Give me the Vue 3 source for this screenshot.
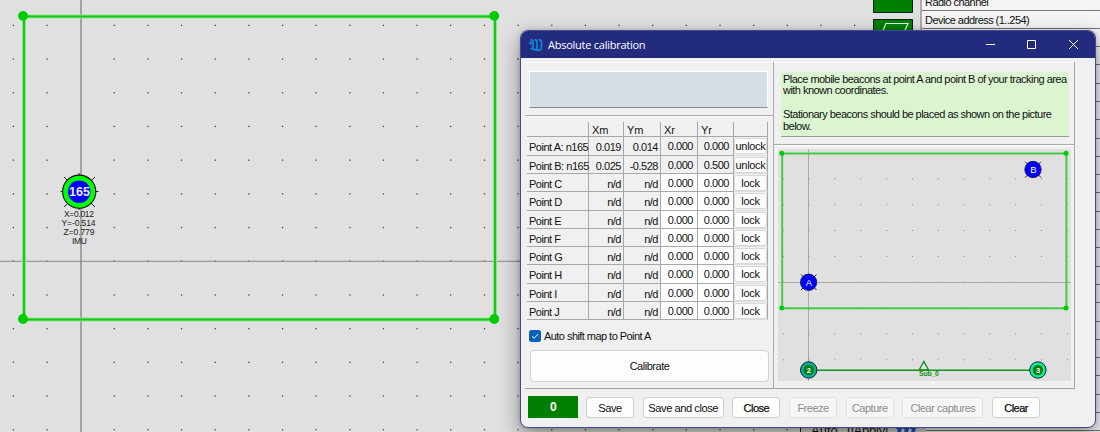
<template>
  <div class="desktop">
    <svg class="map" width="1100" height="432" viewBox="0 0 1100 432">
      <g class="dots">
        <template v-for="y in mapDotsY" :key="y">
          <rect v-for="x in mapDotsX" :key="x" :x="x" :y="y" width="1.3" height="1.3" />
        </template>
      </g>
      <path class="axis-y" d="M81 0V432" />
      <path class="axis-x" d="M0 261.3H920" />
      <rect class="zone-glow" x="24" y="16.5" width="471" height="303" />
      <rect class="zone" x="24" y="16.5" width="471" height="303" />
      <circle v-for="c in zoneCorners" :key="c.join()" class="corner" :cx="c[0]" :cy="c[1]" r="4.9" />
      <path
        class="rays"
        d="M79 173V210M60.5 191.5H98.5M64 177L95 207M95 177L64 207"
      />
      <circle class="beacon" cx="79.2" cy="191.7" r="16.6" />
      <circle class="beacon-core" cx="79.2" cy="191.7" r="11.3" />
      <text class="beacon-id" x="79.4" y="196.1" textLength="21">165</text>
      <g class="coords">
        <text x="64" y="216.7" textLength="30">X=0.012</text>
        <text x="61.5" y="226" textLength="34">Y=-0.514</text>
        <text x="63.5" y="235" textLength="31">Z=0.779</text>
        <text x="72" y="244.2" textLength="15">IMU</text>
      </g>
    </svg>

    <div class="side">
      <div class="side-tools">
        <div class="tool"></div>
        <div class="tool">
          <svg width="38" height="22" viewBox="0 0 38 22">
            <path d="M6 17L12 3.5H34L28 17Z" fill="none" stroke="#e6ffe6" stroke-width="1.2" />
          </svg>
        </div>
      </div>
      <div class="side-list">
        <div class="side-row">Radio channel</div>
        <div class="side-row">Device address (1..254)</div>
        <div v-for="n in 22" :key="n" class="side-row"></div>
      </div>
    </div>

    <div class="footer-strip">
      <span class="auto">Auto</span>
      <span class="apply">[|Apply|</span>
      <svg width="34" height="12" viewBox="0 0 34 12">
        <path d="M-1 0L8 6L6 12M6 0L15 6L13 12M13 0L22 6L20 12" fill="none" stroke="#1e50c8" stroke-width="3.5" />
      </svg>
    </div>

    <div class="window">
      <div class="titlebar">
        <svg class="logo" width="14" height="14" viewBox="0 0 14 14">
          <path d="M1.5 2Q4.5 1.5 4 5V9Q4 11.5 1.5 10.5M5.5 2Q8.5 1.5 8 5V9Q8 12.5 4 11.5M9.5 2Q13 1.5 12.5 5V9Q12.5 13 7.5 12" />
          <circle cx="1.5" cy="5" r="0.7" />
        </svg>
        <span class="title">Absolute calibration</span>
        <svg class="controls" width="92" height="12" viewBox="0 0 92 12">
          <path d="M1 5.5H10M42.5 1.5H50.5V9.5H42.5ZM84 1L93 10M93 1L84 10" />
        </svg>
      </div>

      <div class="content">
        <div class="left">
          <div class="status-panel">
            <div class="status-box"></div>
          </div>
          <div class="table-panel">
            <div class="grid">
              <div class="cell head"></div>
              <div v-for="h in headers" :key="h" class="cell head">{{ h }}</div>
              <div class="cell head"></div>
              <template v-for="p in points" :key="p.name">
                <div class="cell name">{{ p.name }}</div>
                <div class="cell num">{{ p.xm }}</div>
                <div class="cell num">{{ p.ym }}</div>
                <div class="cell num real" :class="{ editable: !p.locked }">{{ p.xr }}</div>
                <div class="cell num real" :class="{ editable: !p.locked }">{{ p.yr }}</div>
                <div class="cell action">
                  <button class="lock">{{ p.locked ? 'unlock' : 'lock' }}</button>
                </div>
              </template>
            </div>
          </div>
          <label class="shift">
            <span class="check">
              <svg width="12" height="12" viewBox="0 0 12 12">
                <path d="M3 6.2L5.2 8.2L9.2 4" fill="none" stroke="#fff" stroke-width="1" />
              </svg>
            </span>
            <span>Auto shift map to Point A</span>
          </label>
          <button class="calibrate">Calibrate</button>
        </div>

        <div class="right">
          <div class="hint-panel">
            <div class="hint">
              Place mobile beacons at point A and point B of your tracking area<br />
              with known coordinates.<br /><br />
              Stationary beacons should be placed as shown on the picture<br />
              below.
            </div>
          </div>
          <div class="scheme-panel">
            <svg class="scheme" width="293" height="232" viewBox="778 149.5 293 232">
              <g class="scheme-dots">
                <template v-for="y in schemeDotsY" :key="y">
                  <rect v-for="x in schemeDotsX" :key="x" :x="x" :y="y" width="1" height="1" />
                </template>
              </g>
              <path class="scheme-axis" d="M808.5 149V382M778 283H1071" />
              <rect class="scheme-zone" x="782.2" y="154" width="284.2" height="154.8" />
              <circle v-for="c in schemeCorners" :key="c.join()" class="corner" :cx="c[0]" :cy="c[1]" r="2.5" />
              <path class="rays" d="M801 275L816.5 290.5M816.5 275L801 290.5M1025.2 162.2L1041 178M1041 162.2L1025.2 178" />
              <circle class="mobile" cx="808.6" cy="282.8" r="8.2" />
              <circle class="mobile" cx="1033" cy="170" r="8.2" />
              <text class="mobile-id" x="808.6" y="286.4">A</text>
              <text class="mobile-id" x="1033.2" y="173.6">B</text>
              <path class="base" d="M809 370.8H1038" />
              <path class="submap" d="M919.2 370.5L923.8 362L928.5 370.5Z" />
              <text class="submap-id" x="919" y="376" textLength="19.5">Sub_0</text>
              <circle class="station" cx="808.7" cy="370.5" r="8.2" />
              <circle class="station bright" cx="1037.9" cy="370.5" r="8.2" />
              <circle class="station-core" cx="808.7" cy="370.5" r="5.2" />
              <circle class="station-core" cx="1037.9" cy="370.5" r="5.2" />
              <text class="station-id" x="808.7" y="373.2">2</text>
              <text class="station-id" x="1037.9" y="373.2">3</text>
            </svg>
          </div>
        </div>
      </div>

      <div class="actions">
        <div class="counter">0</div>
        <button
          v-for="b in buttons"
          :key="b.label"
          class="btn"
          :class="[b.kind, { wide: b.wide }]"
          :disabled="b.kind === 'off'"
        >{{ b.label }}</button>
      </div>
    </div>
  </div>
</template>

<script setup>
const steps = (start, step, count) =>
  Array.from({ length: count }, (_, i) => +(start + step * i).toFixed(1));

const mapDotsX = steps(12.7, 33.65, 27).filter((x) => x < 870);
const mapDotsY = steps(24.7, 33.7, 13);
const schemeDotsX = steps(782.8, 25.82, 12);
const schemeDotsY = steps(178.8, 25.85, 8);

const zoneCorners = [[23, 15.9], [494.3, 15.9], [23, 319], [494.3, 319]];
const schemeCorners = [[781.8, 153.8], [1066, 153.8], [781.8, 308.5], [1066, 308.5]];

const headers = ['Xm', 'Ym', 'Xr', 'Yr'];

const points = [
  { name: 'Point A: n165', xm: '0.019', ym: '0.014', xr: '0.000', yr: '0.000', locked: true },
  { name: 'Point B: n165', xm: '0.025', ym: '-0.528', xr: '0.000', yr: '0.500', locked: true },
  ...'CDEFGHIJ'.split('').map((letter) => ({
    name: `Point ${letter}`,
    xm: 'n/d',
    ym: 'n/d',
    xr: '0.000',
    yr: '0.000',
    locked: false
  }))
];

const buttons = [
  { label: 'Save', kind: 'big' },
  { label: 'Save and close', kind: 'big', wide: true },
  { label: 'Close', kind: 'strong' },
  { label: 'Freeze', kind: 'off' },
  { label: 'Capture', kind: 'off' },
  { label: 'Clear captures', kind: 'off', wide: true },
  { label: 'Clear', kind: 'strong' }
];
</script>

<style>
body {
  overflow: hidden;
}
</style>

<style scoped>
.desktop {
  position: relative;
  width: 1100px;
  height: 432px;
  overflow: hidden;
  background: #e0e0e0;
  font-family: "Liberation Sans", Arial, sans-serif;
  font-size: 11px;
  letter-spacing: -0.48px;
  color: #111;
}

.desktop * {
  box-sizing: border-box;
}

.map {
  display: block;
  letter-spacing: 0;
}

.dots {
  fill: #444;
}

.axis-y {
  stroke: #a2a2a2;
  stroke-width: 2;
}

.axis-x {
  stroke: #888;
  stroke-width: 1;
}

.zone-glow {
  fill: none;
  stroke: #8df08d;
  stroke-width: 4;
}

.zone {
  fill: none;
  stroke: #1cc41c;
  stroke-width: 2.2;
}

.corner {
  fill: #0c0;
}

.rays {
  stroke: #222;
  stroke-width: 1;
}

.beacon {
  fill: #0f0;
  stroke: #111;
  stroke-width: 1.1;
}

.beacon-core {
  fill: #00f;
}

.beacon-id {
  font-size: 12.5px;
  font-weight: bold;
  fill: #e8e8ff;
  text-anchor: middle;
}

.coords {
  font-size: 8.5px;
  fill: #222;
}

.side {
  position: absolute;
  top: 0;
  right: 0;
  display: flex;
  gap: 7px;
  width: 227px;
  height: 432px;
}

.side-tools {
  display: flex;
  flex-direction: column;
  gap: 6px;
  width: 40px;
}

.tool {
  height: 22px;
  border: 1px solid #122;
  background: #008000;
}

.tool:first-child {
  height: 13px;
  border-top: 0;
}

.side-list {
  flex: 1;
  border-left: 2px solid #aaa;
  background: #f4f4f4;
}

.side-row {
  height: 18.3px;
  padding: 3.5px 0 0 3px;
  border-bottom: 1px solid #777;
  line-height: 13px;
  letter-spacing: -0.55px;
}

.side-row:first-child {
  height: 10.5px;
  padding-top: 0;
  line-height: 5px;
}

.footer-strip {
  position: absolute;
  left: 800px;
  top: 423px;
  display: flex;
  height: 9px;
  overflow: hidden;
  background: #d2d2d2;
  font-size: 13px;
  line-height: 15px;
}

.auto {
  width: 47px;
  padding-left: 10px;
  border-left: 1px solid #222;
  letter-spacing: 0;
}

.apply {
  width: 45px;
  letter-spacing: -0.2px;
}

.window {
  position: absolute;
  left: 520px;
  top: 30px;
  width: 576px;
  height: 398px;
  border: 1px solid #44488c;
  border-radius: 8px;
  overflow: hidden;
  background: #f0f0f0;
  box-shadow: 0 9px 22px rgba(0, 0, 0, 0.38), 0 0 5px rgba(0, 0, 0, 0.2);
}

.titlebar {
  display: flex;
  align-items: center;
  height: 27px;
  padding-left: 8px;
  background: #232b7e;
  color: #fff;
}

.logo {
  fill: none;
  stroke: #1285d6;
  stroke-width: 1.8;
}

.title {
  flex: 1;
  padding-left: 5px;
  font-family: "Open Sans", "Noto Sans", sans-serif;
  font-size: 11px;
  letter-spacing: -0.25px;
}

.controls {
  margin-right: 18px;
  overflow: visible;
  fill: none;
  stroke: #fff;
  stroke-width: 1;
}

.content {
  display: flex;
  height: 331px;
  margin: 0 20px 0 4px;
  padding-top: 4px;
  border-bottom: 1px solid #a0a0a0;
}

.left {
  width: 249px;
  border-right: 1px solid #aaa;
}

.status-panel {
  height: 54px;
  padding: 8px 5px 0 4px;
  border-top: 1px solid #fff;
  border-bottom: 1px solid #aaa;
}

.status-box {
  height: 37px;
  border: 1px solid #fff;
  border-bottom: 1px solid #8a8a8a;
  background: #d7dee6;
}

.table-panel {
  padding: 5px 5px 0 2px;
  border-top: 1px solid #fff;
}

.grid {
  display: grid;
  grid-template-columns: 62px 35px 37px 37px 36px 34px;
  grid-template-rows: 15.4px repeat(10, 18.3px);
}

.cell {
  border-right: 1px solid #a8a8a8;
  border-bottom: 1px solid #a8a8a8;
  line-height: 20px;
  white-space: nowrap;
}

.head {
  padding-left: 3px;
  line-height: 16px;
  letter-spacing: 0;
}

.name {
  padding-left: 2px;
}

.num {
  padding-right: 2px;
  text-align: right;
}

.real {
  padding-right: 4px;
  line-height: 18px;
}

.editable {
  background: #fff;
}

.action {
  border-bottom-color: #ddd;
}

button {
  font-family: inherit;
  font-size: 11px;
  letter-spacing: inherit;
  color: #111;
}

.lock {
  display: block;
  width: 33px;
  height: 16px;
  margin-top: 1px;
  padding: 0;
  border: 1px solid #d8d8d8;
  border-radius: 3px;
  background: #fdfdfd;
  line-height: 14px;
  letter-spacing: -0.3px;
}

.shift {
  display: flex;
  align-items: center;
  gap: 3px;
  margin: 10px 0 0 4px;
  height: 12px;
  letter-spacing: -0.55px;
}

.check {
  width: 12px;
  height: 12px;
  border-radius: 2.5px;
  background: #0560b8;
}

.check svg {
  display: block;
}

.calibrate {
  display: block;
  width: 239px;
  height: 32px;
  margin: 8px 0 0 5px;
  border: 1px solid #d2d2d2;
  border-radius: 4px;
  background: #fdfdfd;
}

.right {
  width: 301px;
  border-right: 1px solid #a8a8a8;
}

.hint-panel {
  height: 83px;
  padding: 9px 5px 0 7px;
  border-top: 1px solid #fff;
  border-bottom: 1px solid #aaa;
}

.hint {
  height: 65px;
  padding: 1.5px 0 0 2px;
  border-bottom: 1px solid #999;
  background: #daf5d0;
  line-height: 11.9px;
  letter-spacing: -0.53px;
  white-space: nowrap;
}

.scheme-panel {
  padding: 3px 0 0 4px;
  border-top: 1px solid #fff;
}

.scheme {
  display: block;
  background: #e0e0e0;
}

.scheme-dots {
  fill: #888;
}

.scheme-axis {
  fill: none;
  stroke: #a8a8a8;
  stroke-width: 1;
}

.scheme-zone {
  fill: none;
  stroke: #3ccc3c;
  stroke-width: 1.9;
}

.mobile {
  fill: #00f;
  stroke: #113;
  stroke-width: 0.8;
}

.mobile-id {
  font-size: 9.5px;
  fill: #fff;
  text-anchor: middle;
}

.base {
  stroke: #169016;
  stroke-width: 1.6;
}

.submap {
  fill: none;
  stroke: #169016;
  stroke-width: 1.4;
}

.submap-id {
  font-size: 7px;
  font-weight: bold;
  fill: #169016;
}

.station {
  fill: #0aae94;
  stroke: #124;
  stroke-width: 1;
}

.station.bright {
  fill: #0df09a;
}

.station-core {
  fill: #078010;
}

.station-id {
  font-size: 7.5px;
  font-weight: bold;
  fill: #fff;
  text-anchor: middle;
}

.actions {
  display: flex;
  gap: 8.7px;
  padding: 7px 0 0 7px;
}

.counter {
  width: 50px;
  height: 22px;
  margin-right: -0.7px;
  background: #008000;
  color: #fff;
  font-size: 12px;
  font-weight: bold;
  line-height: 23px;
  text-align: center;
}

.btn {
  width: 48px;
  height: 21px;
  margin-top: 1px;
  padding: 0;
  border: 1px solid #cfcfcf;
  border-radius: 3px;
  background: #fdfdfd;
  white-space: nowrap;
}

.wide {
  width: 81px;
}

.big {
  font-size: 11.2px;
}

.strong {
  -webkit-text-stroke: 0.25px #111;
}

.off {
  border-color: #e2e2e2;
  background: #f6f6f6;
  color: #8c8c8c;
}
</style>
